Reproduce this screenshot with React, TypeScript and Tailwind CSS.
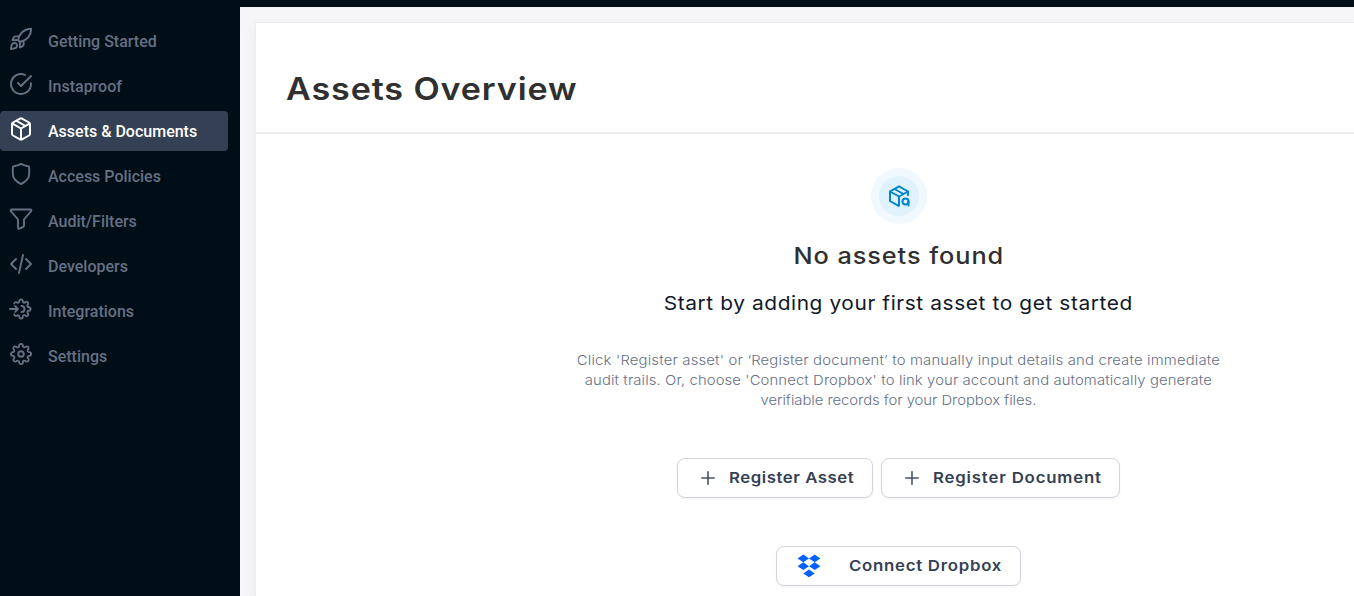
import type { ReactNode } from "react";
import { FiSettings } from "react-icons/fi";

const HEX =
  "M11 1.600a2 2 0 0 1 2 0l7 3.900a2 2 0 0 1 1 1.800v9.400a2 2 0 0 1-1 1.800l-7 3.900a2 2 0 0 1-2 0l-7-3.900a2 2 0 0 1-1-1.800V7.300a2 2 0 0 1 1-1.800z";

function Icon({ children, size = 24, width = 1.9 }: { children: ReactNode; size?: number; width?: number }) {
  return (
    <svg
      width={size}
      height={size}
      viewBox="0 0 24 24"
      fill="none"
      stroke="currentColor"
      strokeWidth={width}
      strokeLinecap="round"
      strokeLinejoin="round"
      className="shrink-0"
    >
      {children}
    </svg>
  );
}

const Rocket = () => (
  <Icon>
    <path d="M9 13C10.500 7 14.500 2 22.200 1.800C22 9.500 17 13.500 11 15z" />
    <path d="M9.800 9.400H6.500C4.500 9.400 4.200 11.500 3.600 13.200L9 13M14.600 14.200V17.500C14.600 19.500 12.500 19.800 10.800 20.400L11 15" />
    <path d="M7.300 16.700C5.900 15.300 3.400 16 2.800 17.800C2.300 19.300 2 22 2 22S4.700 21.700 6.200 21.200C8 20.600 8.700 18.100 7.300 16.700z" />
  </Icon>
);

const CheckCircle = () => (
  <Icon>
    <path d="M22 11.080V12a10 10 0 1 1-5.930-9.140" />
    <path d="M22 4L12 14.010l-3-3" />
  </Icon>
);

const Box = () => (
  <Icon width={2}>
    <path d={HEX} />
    <path d="M3.500 6.600L12 11.500l8.500-4.900M12 11.500v10.500M7.500 3.900l9 5.100" />
  </Icon>
);

const BoxSearch = () => (
  <Icon width={2}>
    <path d="M21 11V7.500L12 2.300L3 7.500V17l8.500 4.800" />
    <path d="M3 7.500L12 12.500l9-5M12 12.500V21.500M7.500 5l9 5" />
    <circle cx="18.500" cy="17.500" r="3" />
    <path d="M21.500 17.500V21.500" />
  </Icon>
);

const Shield = () => (
  <Icon>
    <path d="M12 1.800c2 1 5 2 7.300 2.500c.6.100.9.600.9 1.200V12c0 5-4.200 8-8.200 10.200C8 20 3.800 17 3.800 12V5.500c0-.6.300-1.100.9-1.200C7 3.800 10 2.800 12 1.800z" />
  </Icon>
);

const Funnel = () => (
  <Icon>
    <path d="M2.600 2.500H21.400c1 0 1.300 1 .7 1.700L15 12.500v6.300c0 .5-.2.800-.6 1l-4 1.800c-.7.300-1.400 0-1.400-.8v-8.300L1.900 4.200C1.300 3.500 1.600 2.500 2.600 2.500z" />
  </Icon>
);

const Code = () => (
  <Icon>
    <path d="M17 17l5-5-5-5M7 7l-5 5 5 5M14 3l-4 18" />
  </Icon>
);

const Integration = () => (
  <Icon>
    <g transform="translate(1.560 1.560) scale(0.870)" strokeWidth="2.100">
      <path d="M4.290 5.700a2 2 0 0 1 2.830-1.410l.06.06a1.650 1.650 0 0 0 1.820.33H9a1.650 1.650 0 0 0 1-1.510V3a2 2 0 0 1 2-2 2 2 0 0 1 2 2v.09a1.650 1.650 0 0 0 1 1.510 1.650 1.650 0 0 0 1.820-.33l.06-.06a2 2 0 0 1 2.830 0 2 2 0 0 1 0 2.830l-.06.06a1.650 1.650 0 0 0-.33 1.820V9a1.650 1.650 0 0 0 1.510 1H21a2 2 0 0 1 2 2 2 2 0 0 1-2 2h-.09a1.650 1.650 0 0 0-1.510 1 1.650 1.650 0 0 0 .33 1.820l.06.06a2 2 0 0 1 0 2.830 2 2 0 0 1-2.830 0l-.06-.06a1.650 1.650 0 0 0-1.820-.33 1.650 1.650 0 0 0-1 1.510V21a2 2 0 0 1-2 2 2 2 0 0 1-2-2v-.09A1.650 1.650 0 0 0 9 19.400a1.650 1.650 0 0 0-1.820.33l-.06.06a2 2 0 0 1-2.830-1.490" />
    </g>
    <path d="M1 12H9M6.200 9.200L9 12L6.200 14.800M12.500 9a3 3 0 0 1 0 6" />
  </Icon>
);

const Gear = () => (
  <span className="flex size-6 items-center justify-center">
    <FiSettings size={22} strokeWidth={2} />
  </span>
);

const NAV: { label: string; icon: ReactNode; active?: boolean }[] = [
  { label: "Getting Started", icon: <Rocket /> },
  { label: "Instaproof", icon: <CheckCircle /> },
  { label: "Assets & Documents", icon: <Box />, active: true },
  { label: "Access Policies", icon: <Shield /> },
  { label: "Audit/Filters", icon: <Funnel /> },
  { label: "Developers", icon: <Code /> },
  { label: "Integrations", icon: <Integration /> },
  { label: "Settings", icon: <Gear /> },
];

function Sidebar() {
  return (
    <aside className="w-60 shrink-0 bg-[#000e17] pt-[21px] font-['Roboto',sans-serif]">
      <nav className="flex flex-col gap-[5px]">
        {NAV.map(({ label, icon, active }) => (
          <a
            key={label}
            className={
              active
                ? "flex h-10 w-[228px] items-center gap-[15px] rounded bg-[#344054] pl-[9px] text-white"
                : "flex h-10 w-[228px] items-center gap-[15px] pl-[9px] text-[#667085]"
            }
          >
            <span className="mb-1">{icon}</span>
            <span className="pt-0.5 text-base font-medium whitespace-nowrap">{label}</span>
          </a>
        ))}
      </nav>
    </aside>
  );
}

function Plus() {
  return (
    <svg width="14" height="14" viewBox="0 0 14 14" stroke="#475467" strokeWidth="1.600" strokeLinecap="round" className="shrink-0">
      <path d="M7 .8v12.400M.8 7h12.400" />
    </svg>
  );
}

function Dropbox() {
  return (
    <svg width="24" height="24" viewBox="0 0 24 24" fill="#0061ff" className="shrink-0">
      <path d="M6.300.5L12 4.400L6.300 8.300L.6 4.400zM17.700.5l5.700 3.900l-5.700 3.900L12 4.400zM6.300 8.300L12 12.200l-5.700 3.900L.6 12.200zM17.700 8.300l5.700 3.900l-5.700 3.900L12 12.200zM12 15.500l5.700 3.900L12 23.300l-5.700-3.900z" />
    </svg>
  );
}

const BUTTON =
  "flex h-10 items-center rounded-lg border border-[#d0d5dd] bg-white text-[15px] font-semibold whitespace-nowrap text-[#344054] shadow-[0_1px_2px_rgba(16,24,40,0.05)]";

const BUTTON_LABEL = "origin-left scale-x-112";

export default function App() {
  return (
    <div className="flex h-[596px] w-full overflow-hidden bg-[#000e17] font-['Inter',sans-serif]">
      <Sidebar />
      <main className="mt-[7px] flex min-w-0 grow bg-[#f6f6f8] pt-[15px] pl-[15px]">
        <section className="flex min-w-0 grow flex-col border-t border-l border-[#eaecf0] bg-white shadow-[0_4px_12px_rgba(16,24,40,0.06)]">
          <header className="flex h-[111px] shrink-0 items-center border-b-2 border-[#eaecf0] pt-[23px] pl-[30px]">
            <h1 className="origin-left scale-x-110 text-[31px] font-semibold tracking-[0.8px] whitespace-nowrap text-[#303030]">
              Assets Overview
            </h1>
          </header>
          <div className="-mr-[187px] flex w-[1285px] shrink-0 flex-col items-center pt-[34px]">
            <div className="flex size-14 items-center justify-center rounded-full bg-[#f0f9ff]">
              <div className="flex size-10 items-center justify-center rounded-full bg-[#e0f2fe] text-[#0086c9]">
                <BoxSearch />
              </div>
            </div>
            <h2 className="mt-4 scale-x-110 text-[23px] leading-8 font-medium tracking-[0.85px] whitespace-nowrap text-[#303030]">
              No assets found
            </h2>
            <p className="mt-[17px] scale-x-110 text-[19px] leading-[30px] tracking-[0.53px] whitespace-nowrap text-[#101828]">
              Start by adding your first asset to get started
            </p>
            <div className="mt-[31px] flex scale-x-110 flex-col items-center text-[13.5px] leading-5 font-light whitespace-nowrap text-[#667085]">
              <span className="tracking-[0.16px]">
                Click 'Register asset' or ‘Register document’ to manually input details and create immediate
              </span>
              <span className="tracking-[0.09px]">
                audit trails. Or, choose 'Connect Dropbox' to link your account and automatically generate
              </span>
              <span className="-tracking-[0.04px]">verifiable records for your Dropbox files.</span>
            </div>
            <div className="mt-12 flex gap-2">
              <button className={`${BUTTON} w-[196px] gap-[14px] pl-[23px]`}>
                <Plus />
                <span className={`${BUTTON_LABEL} tracking-[0.47px]`}>Register Asset</span>
              </button>
              <button className={`${BUTTON} w-[239px] gap-[14px] pl-[23px]`}>
                <Plus />
                <span className={`${BUTTON_LABEL} tracking-[0.72px]`}>Register Document</span>
              </button>
            </div>
            <button className={`${BUTTON} mt-12 w-[245px] gap-7 pl-5`}>
              <Dropbox />
              <span className={`${BUTTON_LABEL} tracking-[0.65px]`}>Connect Dropbox</span>
            </button>
          </div>
        </section>
      </main>
    </div>
  );
}
